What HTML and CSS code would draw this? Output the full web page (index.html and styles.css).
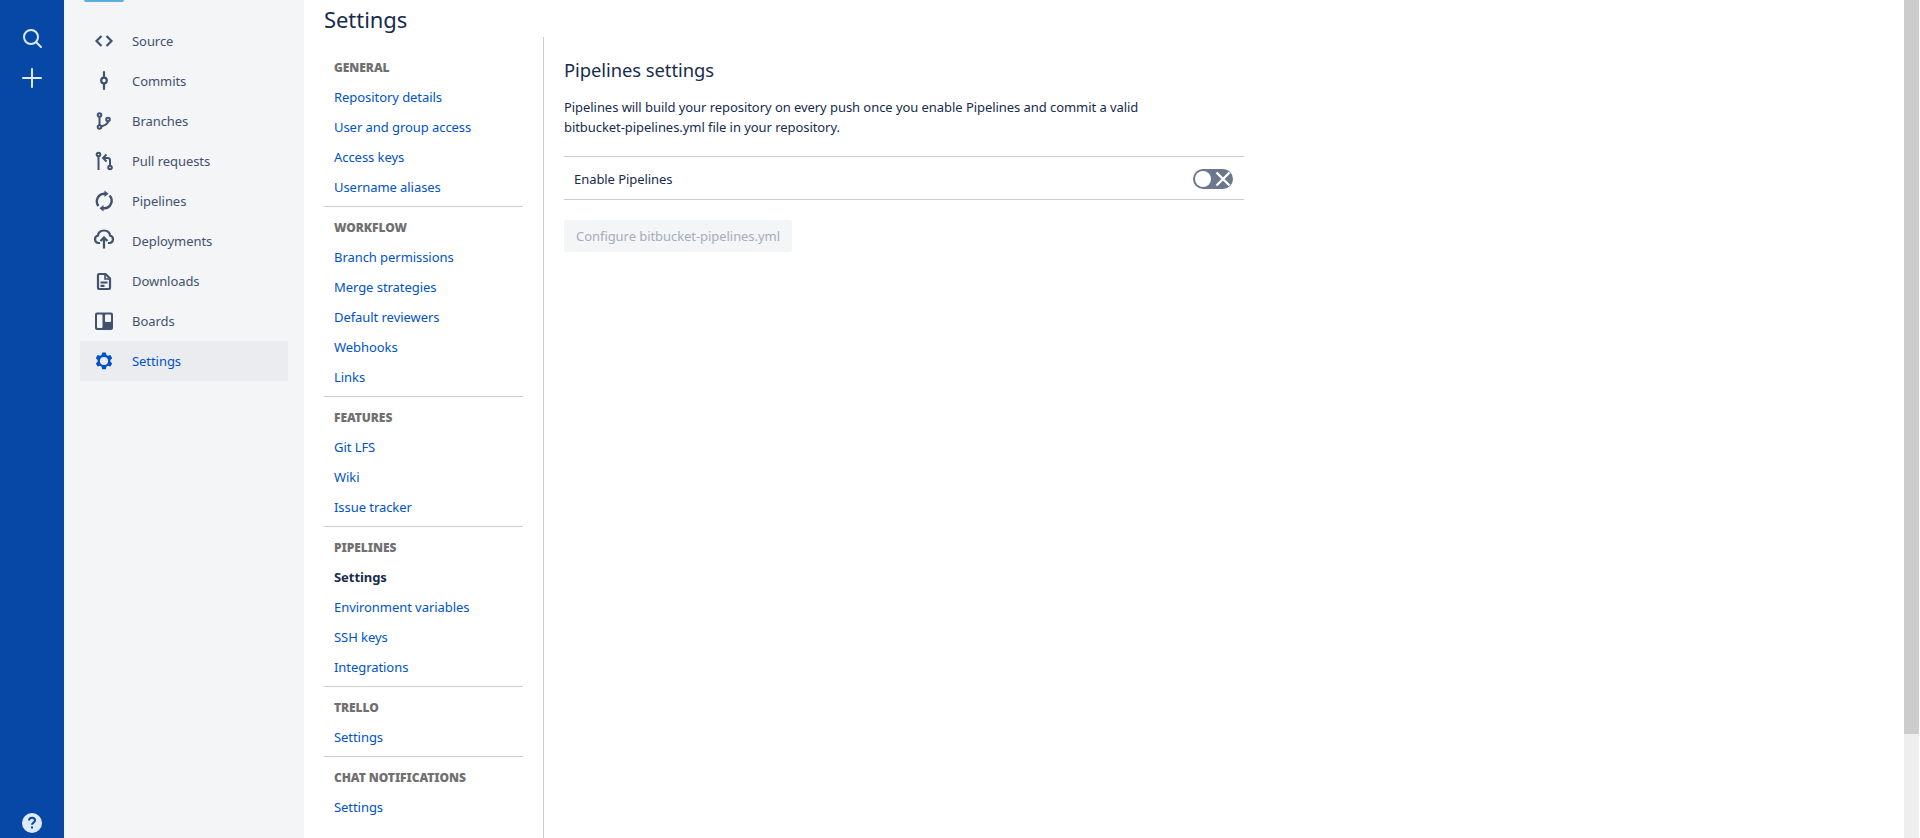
FILE: index.html
```html
<!DOCTYPE html>
<html>
	<head>
		<meta charset="utf-8" />
		<meta name="viewport" content="width=device-width, initial-scale=1">
		<title>Pipelines settings</title>
		<link rel="stylesheet" href="styles.css">
	</head>
	<body>
		<div class="page">
			<nav class="global-nav">
				<div class="global-top">
					<svg class="global-icon" width="24" height="24" viewBox="0 0 24 24" fill="none" stroke="#deebff" stroke-width="2"><circle cx="11" cy="11" r="7"/><path d="M16 16l5 5" stroke-linecap="round"/></svg>
					<svg class="global-icon" width="24" height="24" viewBox="0 0 24 24" fill="none" stroke="#deebff" stroke-width="2"><path d="M12 3v18M3 12h18" stroke-linecap="round"/></svg>
				</div>
				<svg class="help-icon" width="24" height="24" viewBox="0 0 24 24"><circle cx="12" cy="12" r="10" fill="#deebff"/><path d="M9 9.600c0-1.700 1.300-2.800 3-2.800s3 1.100 3 2.600c0 2.200-3 2.300-3 4.300" fill="none" stroke="#0747a6" stroke-width="2"/><rect x="11" y="15.500" width="2" height="2" fill="#0747a6"/></svg>
			</nav>

			<nav class="side-nav">
				<div class="side-tab"></div>
				<ul class="side-list">
					<li class="side-item">
						<svg class="side-icon" width="24" height="24" viewBox="0 0 24 24" fill="none" stroke="currentColor" stroke-width="2.200"><path d="M9.500 7L4.500 12l5 5M14.500 7l5 5-5 5"/></svg>
						Source
					</li>
					<li class="side-item">
						<svg class="side-icon" width="24" height="24" viewBox="0 0 24 24" fill="none" stroke="currentColor" stroke-width="2.200"><circle cx="12" cy="11.500" r="2.800"/><path d="M12 3v5.500M12 14.500V20" stroke-linecap="round"/></svg>
						Commits
					</li>
					<li class="side-item">
						<svg class="side-icon" width="24" height="24" viewBox="0 0 24 24" fill="none" stroke="currentColor" stroke-width="2"><circle cx="7.500" cy="6" r="1.800"/><circle cx="7.500" cy="18" r="1.800"/><circle cx="16" cy="10.500" r="1.800"/><path d="M7.500 8v8M16 12.500c0 3-3.500 3.500-6.700 5"/></svg>
						Branches
					</li>
					<li class="side-item">
						<svg class="side-icon" width="24" height="24" viewBox="0 0 24 24" fill="none" stroke="currentColor" stroke-width="2"><circle cx="6.500" cy="5.500" r="1.800"/><circle cx="18" cy="18.500" r="1.800"/><path d="M6.500 7.500V21M18 16.500V11c0-1.500-1-2-2.500-2H12"/><path d="M14.500 5.500L11 9l3.500 3.500"/></svg>
						Pull requests
					</li>
					<li class="side-item">
						<svg class="side-icon" width="24" height="24" viewBox="0 0 24 24" fill="none" stroke="currentColor" stroke-width="2.400"><path d="M6.500 17A7.500 7.500 0 0 1 12 4.800h2"/><path d="M17.500 6.500A7.500 7.500 0 0 1 12 19.200h-2"/><path d="M12.500 1.500v6.500L16.500 4.800zM11.500 22.500V16L7.500 19.200z" fill="currentColor" stroke="none"/></svg>
						Pipelines
					</li>
					<li class="side-item">
						<svg class="side-icon" width="24" height="24" viewBox="0 0 24 24" fill="none" stroke="currentColor" stroke-width="2.200"><path d="M8 14H6.500A3.800 3.800 0 0 1 6 6.500 a6 5 0 0 1 12 0A3.800 3.800 0 0 1 17.500 14H16"/><path d="M12 19.500V8.500M8.500 12L12 8.500l3.500 3.500"/></svg>
						Deployments
					</li>
					<li class="side-item">
						<svg class="side-icon" width="24" height="24" viewBox="0 0 24 24" fill="none" stroke="currentColor" stroke-width="2.200"><path d="M7 5h6.500L18 9.500V19a1 1 0 0 1-1 1H7a1 1 0 0 1-1-1V6a1 1 0 0 1 1-1z" stroke-linejoin="round"/><path d="M13 5v5h5" stroke-width="1.600"/><path d="M8.500 13.500h7M8.500 16.800h4"/></svg>
						Downloads
					</li>
					<li class="side-item">
						<svg class="side-icon" width="24" height="24" viewBox="0 0 24 24"><path fill="currentColor" fill-rule="evenodd" d="M5 3.500h14a2 2 0 0 1 2 2V19a2 2 0 0 1-2 2H5a2 2 0 0 1-2-2V5.500a2 2 0 0 1 2-2zm1 2a1 1 0 0 0-1 1V18a1 1 0 0 0 1 1h3.500a1 1 0 0 0 1-1V6.500a1 1 0 0 0-1-1zm8 0a1 1 0 0 0-1 1v5.500a1 1 0 0 0 1 1h4a1 1 0 0 0 1-1V6.500a1 1 0 0 0-1-1z"/></svg>
						Boards
					</li>
					<li class="side-item side-active">
						<svg class="side-icon" width="24" height="24" viewBox="0 0 24 24"><path transform="translate(12 12) scale(.9) translate(-12 -12)" fill="currentColor" fill-rule="evenodd" d="M10 2.500h4l.7 2.700 1.700 1 2.700-.8 2 3.500-2 1.900v2l2 1.900-2 3.500-2.700-.8-1.700 1-.7 2.700h-4l-.7-2.700-1.700-1-2.700.8-2-3.500 2-1.900v-2l-2-1.900 2-3.500 2.700.8 1.700-1zM12 7.500a4.500 4.500 0 1 0 0 9 4.500 4.500 0 0 0 0-9z"/></svg>
						Settings
					</li>
				</ul>
			</nav>

			<div class="content">
				<h1 class="page-title">Settings</h1>
				<div class="columns">
					<aside class="settings-nav">
						<section class="nav-group">
							<h2 class="nav-heading">General</h2>
							<a class="nav-link" href="#">Repository details</a>
							<a class="nav-link" href="#">User and group access</a>
							<a class="nav-link" href="#">Access keys</a>
							<a class="nav-link" href="#">Username aliases</a>
						</section>
						<section class="nav-group">
							<h2 class="nav-heading">Workflow</h2>
							<a class="nav-link" href="#">Branch permissions</a>
							<a class="nav-link" href="#">Merge strategies</a>
							<a class="nav-link" href="#">Default reviewers</a>
							<a class="nav-link" href="#">Webhooks</a>
							<a class="nav-link" href="#">Links</a>
						</section>
						<section class="nav-group">
							<h2 class="nav-heading">Features</h2>
							<a class="nav-link" href="#">Git LFS</a>
							<a class="nav-link" href="#">Wiki</a>
							<a class="nav-link" href="#">Issue tracker</a>
						</section>
						<section class="nav-group">
							<h2 class="nav-heading">Pipelines</h2>
							<a class="nav-link nav-current" href="#">Settings</a>
							<a class="nav-link" href="#">Environment variables</a>
							<a class="nav-link" href="#">SSH keys</a>
							<a class="nav-link" href="#">Integrations</a>
						</section>
						<section class="nav-group">
							<h2 class="nav-heading">Trello</h2>
							<a class="nav-link" href="#">Settings</a>
						</section>
						<section class="nav-group">
							<h2 class="nav-heading">Chat notifications</h2>
							<a class="nav-link" href="#">Settings</a>
						</section>
					</aside>
					<main class="main">
						<h2 class="main-title">Pipelines settings</h2>
						<p class="main-text">Pipelines will build your repository on every push once you enable Pipelines and commit a valid<br>bitbucket-pipelines.yml file in your repository.</p>
						<div class="enable-row">
							<span>Enable Pipelines</span>
							<span class="toggle">
								<span class="toggle-knob"></span>
								<svg width="16" height="16" viewBox="0 0 16 16" fill="none" stroke="#fff" stroke-width="2.400"><path d="M1.500 1.500l13 13M14.500 1.500l-13 13"/></svg>
							</span>
						</div>
						<button class="config-btn" disabled>Configure bitbucket-pipelines.yml</button>
					</main>
				</div>
			</div>

			<div class="scrollbar"><div class="scroll-thumb"></div></div>
		</div>
	</body>
</html>
```

FILE: styles.css
```css
html,body,ul,li,h1,h2,p{
	margin: 0;
	padding: 0;
}
li{
	list-style: none;
}
body{
	font-family: "Noto Sans", "Liberation Sans", sans-serif;
	font-size: 13px;
	letter-spacing: -0.06px;
	line-height: 20px;
	color: #172b4d;
	background: white;
	overflow: hidden;
}
a{
	text-decoration: none;
}
.page{
	display: flex;
	height: 838px;
	overflow: hidden;
}

/* left blue bar */
.global-nav{
	width: 64px;
	flex: none;
	background: #0747a6;
	display: flex;
	flex-direction: column;
	justify-content: space-between;
	align-items: center;
	padding: 26px 0 3px;
	box-sizing: border-box;
}
.global-top{
	display: flex;
	flex-direction: column;
	gap: 16px;
}
.global-icon,.help-icon{
	display: block;
}

/* repo nav */
.side-nav{
	width: 240px;
	flex: none;
	background: #f4f5f7;
	padding: 0 16px;
	box-sizing: border-box;
}
.side-tab{
	width: 40px;
	height: 2px;
	margin: 0 0 19px 4px;
	background: #5aaee0;
	border-radius: 0 0 2px 2px;
}
.side-item{
	height: 40px;
	display: flex;
	align-items: center;
	padding-left: 12px;
	gap: 16px;
	color: #42526e;
}
.side-active{
	background: #ebecf0;
	color: #0052cc;
}

/* content */
.content{
	flex: 1;
	min-width: 0;
	padding-left: 20px;
}
.page-title{
	font-size: 22px;
	line-height: 28px;
	font-weight: 400;
	padding-top: 5px;
	height: 37px;
	box-sizing: border-box;
}
.columns{
	display: flex;
}
.settings-nav{
	width: 220px;
	flex: none;
	height: 801px;
	box-sizing: border-box;
	border-right: 1px solid #ccc;
	padding: 20px 20px 0 0;
}
.nav-group{
	padding: 0 10px 4px;
	margin-bottom: 10px;
	border-bottom: 1px solid #ccc;
}
.nav-group:last-child{
	border-bottom: none;
}
.nav-heading{
	font-size: 12px;
	line-height: 20px;
	font-weight: 900;
	text-transform: uppercase;
	color: #707070;
	margin-bottom: 5px;
	padding-top: 1px;
	height: 19px;
}
.nav-link{
	display: block;
	height: 30px;
	line-height: 30px;
	color: #0052cc;
}
.nav-current{
	color: #172b4d;
	font-weight: 700;
}

/* main panel */
.main{
	width: 680px;
	margin-left: 20px;
}
.main-title{
	font-size: 18.4px;
	line-height: 28px;
	font-weight: 400;
	margin-top: 19px;
}
.main-text{
	margin-top: 13px;
}
.enable-row{
	margin-top: 19px;
	height: 44px;
	box-sizing: border-box;
	border-top: 1px solid #ccc;
	border-bottom: 1px solid #ccc;
	padding: 1px 11px 0 10px;
	display: flex;
	justify-content: space-between;
	align-items: center;
}
.toggle{
	width: 40px;
	height: 20px;
	border-radius: 10px;
	background: #6b778c;
	display: flex;
	align-items: center;
	justify-content: space-between;
	padding: 0 2px;
	box-sizing: border-box;
}
.toggle-knob{
	width: 16px;
	height: 16px;
	border-radius: 50%;
	background: white;
}
.config-btn{
	display: block;
	margin-top: 20px;
	width: 228px;
	height: 32px;
	border: none;
	border-radius: 3px;
	background: #f4f5f7;
	color: #a5adba;
	font: inherit;
	letter-spacing: inherit;
	padding: 0;
}

/* fake browser scrollbar */
.scrollbar{
	width: 15px;
	flex: none;
	margin-right: 1px;
	background: #eee;
}
.scroll-thumb{
	height: 734px;
	background: #ccc;
}
```
